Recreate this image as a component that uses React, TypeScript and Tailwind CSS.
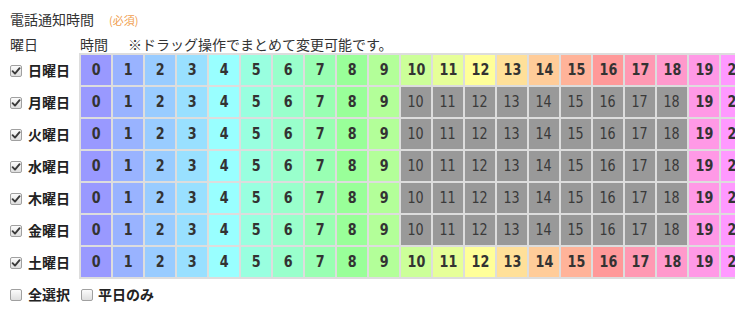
import React from "react";

const COLORS = [
  "#9999ff", "#99b3ff", "#99ccff", "#99e0ff", "#99ffff", "#99ffe0",
  "#99ffcc", "#99ffb3", "#99ff99", "#b3ff99", "#ccff99", "#e6ff99",
  "#ffff99", "#ffe099", "#ffcc99", "#ffb399", "#ff9999", "#ff99b3",
  "#ff99cc", "#ff99e6", "#ff99ff", "#e699ff", "#cc99ff", "#b399ff",
];

const DAYS = ["日曜日", "月曜日", "火曜日", "水曜日", "木曜日", "金曜日", "土曜日"];

const JP = '"Noto Sans CJK JP", sans-serif';
const NUM = '"DejaVu Sans", "Noto Sans", sans-serif';

function Check({ checked }: { checked: boolean }) {
  return (
    <span className="flex h-[12px] w-[12px] shrink-0 items-center justify-center rounded-[2px] border border-[#a0a0a0] bg-gradient-to-b from-[#fbfbfb] to-[#dedede]">
      {checked && (
        <svg width="10" height="10" viewBox="0 0 10 10">
          <path d="M1.6 5.2 L4 7.6 L8.6 2.2" fill="none" stroke="#3a3a3a" strokeWidth="1.9" strokeLinecap="round" strokeLinejoin="round" />
        </svg>
      )}
    </span>
  );
}

export default function App() {
  return (
    <div
      className="relative h-[314px] w-[735px] overflow-hidden bg-white pl-[10px] text-[#333]"
      style={{ fontFamily: JP }}
    >
      <div className="flex h-[20px] items-center pt-[18px] leading-none">
        <span className="text-[14px]">電話通知時間</span>
        <span className="ml-[15px] mt-[3px] text-[11px] text-[#f0a050]">(必須)</span>
      </div>
      <div className="mt-[16px] flex h-[16px] items-center text-[14px] leading-none">
        <span className="w-[70px]">曜日</span>
        <span className="w-[48px]">時間</span>
        <span>※ドラッグ操作でまとめて変更可能です。</span>
      </div>
      <div className="mt-[1px] flex">
        <div className="flex w-[69px] shrink-0 flex-col gap-[2px] pt-[2px]">
          {DAYS.map((d) => (
            <div key={d} className="flex h-[30px] items-center pt-[1px]">
              <Check checked />
              <span className="ml-[6px] text-[14px] font-bold text-[#222]">{d}</span>
            </div>
          ))}
        </div>
        <div className="flex shrink-0 flex-col gap-[2px] bg-[#dddddd] p-[2px]">
          {DAYS.map((d, r) => (
            <div key={d} className="flex gap-[2px]">
              {COLORS.map((c, h) => {
                const off = r >= 1 && r <= 5 && h >= 10 && h <= 18;
                return off ? (
                  <div key={h} className="flex h-[30px] w-[30px] items-center justify-center bg-[#999999] text-[15px] text-[#3a3a3a]" style={{ fontFamily: NUM }}>
                    <span className="inline-block scale-x-[0.85]">{h}</span>
                  </div>
                ) : (
                  <div key={h} className="flex h-[30px] w-[30px] items-center justify-center text-[15px] font-bold text-[#333]" style={{ backgroundColor: c, fontFamily: NUM }}>
                    <span className="inline-block scale-x-[0.85]">{h}</span>
                  </div>
                );
              })}
            </div>
          ))}
        </div>
      </div>
      <div className="mt-[5px] flex items-center">
        <Check checked={false} />
        <span className="ml-[6px] w-[53px] text-[14px] font-bold text-[#222]">全選択</span>
        <Check checked={false} />
        <span className="ml-[5px] text-[14px] font-bold text-[#222]">平日のみ</span>
      </div>
    </div>
  );
}
